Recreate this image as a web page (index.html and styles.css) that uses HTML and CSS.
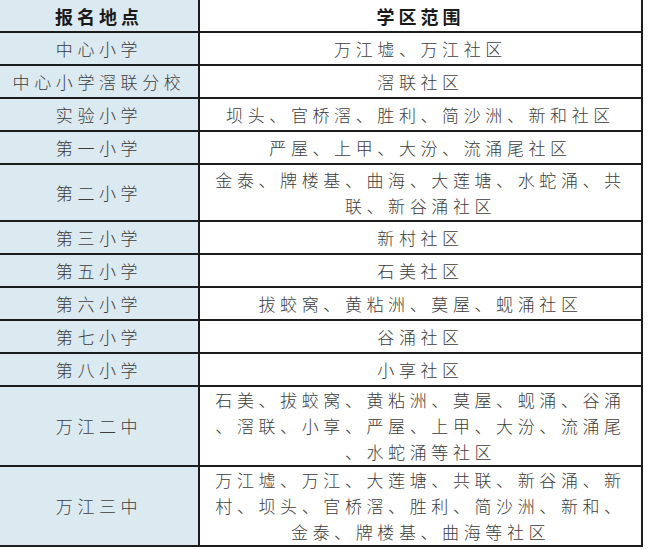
FILE: index.html
```html
<!DOCTYPE html>
<html lang="zh-CN">
<head>
<meta charset="utf-8">
<link rel="stylesheet" href="styles.css">
</head>
<body>
<div class="table">
  <div class="cell name head h1">报名地点</div>
  <div class="cell area head h1">学区范围</div>

  <div class="cell name h1">中心小学</div>
  <div class="cell area h1">万江墟、万江社区</div>

  <div class="cell name h1">中心小学滘联分校</div>
  <div class="cell area h1">滘联社区</div>

  <div class="cell name h1">实验小学</div>
  <div class="cell area h1">坝头、官桥滘、胜利、简沙洲、新和社区</div>

  <div class="cell name h1">第一小学</div>
  <div class="cell area h1">严屋、上甲、大汾、流涌尾社区</div>

  <div class="cell name h2">第二小学</div>
  <div class="cell area h2">金泰、牌楼基、曲海、大莲塘、水蛇涌、共<br>联、新谷涌社区</div>

  <div class="cell name h1">第三小学</div>
  <div class="cell area h1">新村社区</div>

  <div class="cell name h1">第五小学</div>
  <div class="cell area h1">石美社区</div>

  <div class="cell name h1">第六小学</div>
  <div class="cell area h1">拔蛟窝、黄粘洲、莫屋、蚬涌社区</div>

  <div class="cell name h1">第七小学</div>
  <div class="cell area h1">谷涌社区</div>

  <div class="cell name h1">第八小学</div>
  <div class="cell area h1">小享社区</div>

  <div class="cell name h3">万江二中</div>
  <div class="cell area h3">石美、拔蛟窝、黄粘洲、莫屋、蚬涌、谷涌<br>、滘联、小享、严屋、上甲、大汾、流涌尾<br>、水蛇涌等社区</div>

  <div class="cell name h3">万江三中</div>
  <div class="cell area h3">万江墟、万江、大莲塘、共联、新谷涌、新<br>村、坝头、官桥滘、胜利、简沙洲、新和、<br>金泰、牌楼基、曲海等社区</div>
</div>
</body>
</html>
```
FILE: styles.css
```css
html, body {
  margin: 0;
  padding: 0;
  background: #ffffff;
}

.table {
  width: 645px;
  display: grid;
  grid-template-columns: 200px 443px;
  font-family: "Noto Sans CJK SC", sans-serif;
  font-size: 17px;
  font-weight: 300;
  color: #3c3c3c;
}

.cell {
  display: flex;
  align-items: center;
  justify-content: center;
  text-align: center;
  border-bottom: 2px solid #1c1c1c;
  border-right: 2px solid #1c1c1c;
  letter-spacing: 4.6px;
  line-height: 26px;
  white-space: nowrap;
  line-break: anywhere;
}

.name {
  background: #dbe9f1;
}

.area {
  background: #ffffff;
}

.head {
  font-size: 18px;
  font-weight: bold;
  color: #1a1a1a;
  letter-spacing: 4px;
}

.h1 { height: 31px; }
.h2 { height: 55px; }
.h3 { height: 78px; }
```
